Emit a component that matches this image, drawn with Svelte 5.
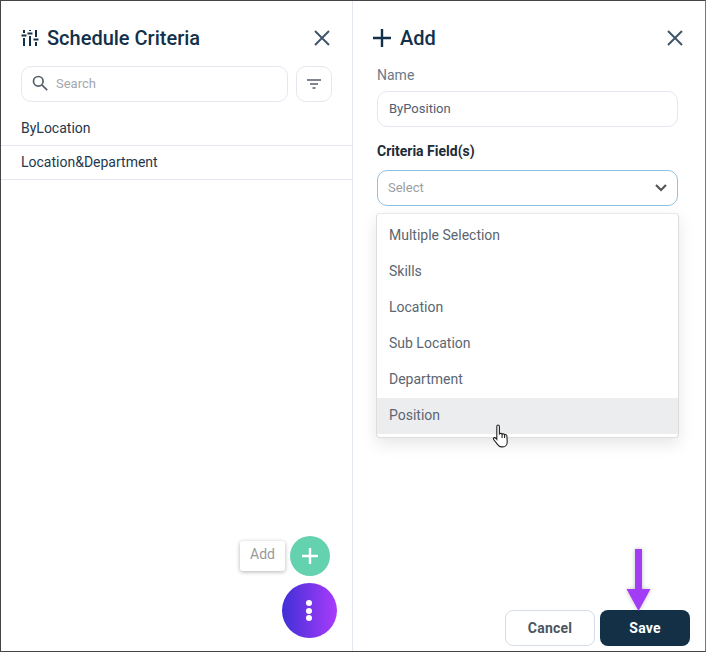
<script>
  let rows = ['ByLocation', 'Location&Department'];
  let fields = ['Multiple Selection', 'Skills', 'Location', 'Sub Location', 'Department', 'Position'];
  let name = 'ByPosition';
</script>

<main>
  <section class="left">
    <header>
      <svg class="tune" width="18" height="18" viewBox="0 0 18 18" fill="none" stroke="#12304a" stroke-width="2">
        <path d="M3 1v3M3 9v8M9 1v1M9 7v10M15 1v7M15 13v4" />
        <path d="M0.500 6.500h5M6.500 4.500h5M12.500 10.500h5" />
      </svg>
      <h1>Schedule Criteria</h1>
      <svg class="close" width="16" height="16" viewBox="0 0 16 16" fill="none" stroke="#41566b" stroke-width="2">
        <path d="M1 1l14 14M15 1L1 15" />
      </svg>
    </header>

    <div class="tools">
      <div class="search">
        <svg width="16" height="16" viewBox="0 0 16 16" fill="none" stroke="#555f6b" stroke-width="1.7">
          <circle cx="6.300" cy="6.300" r="4.800" />
          <path d="M9.800 9.800l5.400 5.400" />
        </svg>
        <span>Search</span>
      </div>
      <button class="filter" aria-label="Filter">
        <svg width="16" height="10" viewBox="0 0 16 10" fill="none" stroke="#555f6b" stroke-width="1.3">
          <path d="M1 1h14M4 5h8M6.500 9h3" />
        </svg>
      </button>
    </div>

    <ul class="rows">
      {#each rows as row}
        <li>{row}</li>
      {/each}
    </ul>

    <div class="tip">Add</div>
    <button class="fab-add" aria-label="Add">
      <svg width="16" height="16" viewBox="0 0 16 16" stroke="#fff" stroke-width="2.400"><path d="M8 0v16M0 8h16" /></svg>
    </button>
    <button class="fab-more" aria-label="More">
      <i></i><i></i><i></i>
    </button>
  </section>

  <section class="right">
    <header>
      <svg class="plus" width="18" height="18" viewBox="0 0 18 18" stroke="#12304a" stroke-width="2.400"><path d="M9 0v18M0 9h18" /></svg>
      <h1>Add</h1>
      <svg class="close" width="16" height="16" viewBox="0 0 16 16" fill="none" stroke="#41566b" stroke-width="2">
        <path d="M1 1l14 14M15 1L1 15" />
      </svg>
    </header>

    <div class="form">
      <div class="label">Name</div>
      <div class="input">{name}</div>
      <div class="label strong">Criteria Field(s)</div>
      <div class="select">
        <span>Select</span>
        <svg width="12" height="8" viewBox="0 0 12 8" fill="none" stroke="#555" stroke-width="2.200"><path d="M1 1l5 5 5-5" /></svg>
      </div>
      <ul class="menu">
        {#each fields as field}
          <li class:hover={field === 'Position'}>{field}</li>
        {/each}
      </ul>
    </div>

    <footer>
      <button class="cancel">Cancel</button>
      <button class="save">Save</button>
    </footer>

    <svg class="arrow" width="31" height="70" viewBox="0 0 31 70">
      <path d="M12 1h7v40h8.500L15.500 63 3.500 41H12z" fill="#a23cf5" />
    </svg>

    <svg class="cursor" width="18" height="26" viewBox="0 0 18 25" fill="#fff" stroke="#222" stroke-width="1.100">
      <path d="M6 1.500c1 0 1.400.7 1.400 1.600v7.200c.5-.6 2.300-.6 2.700.3.700-.5 2.200-.3 2.500.6.800-.4 2.200-.1 2.300 1.200l.3 6c0 2.800-1.800 5-4.500 5H9.500c-2 0-3-1-4-2.500L1.600 16c-.6-1 .1-2 1.100-1.900.9.100 1.500.8 2.100 1.700V3.100C4.800 2.200 5.200 1.500 6 1.500z" />
      <path d="M10.100 10.600v4M12.600 11.200v3.400" fill="none" />
    </svg>
  </section>
</main>

<style>
  :global(body) {
    margin: 0;
    background: #fff;
  }
  main {
    box-sizing: border-box;
    width: 706px;
    height: 652px;
    display: flex;
    border: 1px solid #454545;
    border-right-color: #777;
    font-family: Roboto, "Liberation Sans", sans-serif;
    background: #fff;
    overflow: hidden;
  }
  section {
    position: relative;
    display: flex;
    flex-direction: column;
    height: 100%;
  }
  .left {
    width: 352px;
    box-sizing: border-box;
    border-right: 1px solid #e3e8ee;
  }
  .right {
    flex: 1;
  }
  header {
    display: flex;
    align-items: center;
    height: 26px;
    margin-top: 24px;
    padding: 0 22px 0 20px;
  }
  h1 {
    flex: 1;
    margin: 0 0 0 8px;
    font-size: 20px;
    font-weight: 500;
    color: #12304a;
  }
  .right h1 {
    margin-left: 9px;
  }
  .tools {
    display: flex;
    gap: 8px;
    margin: 15px 20px 0;
  }
  .search {
    box-sizing: border-box;
    width: 267px;
    height: 36px;
    display: flex;
    align-items: center;
    gap: 8px;
    padding: 0 0 2px 10px;
    border: 1px solid #e3e8ee;
    border-radius: 10px;
    font-size: 13px;
    color: #a2a7ad;
  }
  .filter {
    box-sizing: border-box;
    width: 36px;
    height: 36px;
    padding: 0;
    display: flex;
    align-items: center;
    justify-content: center;
    background: #fff;
    border: 1px solid #e3e8ee;
    border-radius: 10px;
  }
  .rows {
    list-style: none;
    margin: 10px 0 0;
    padding: 0;
  }
  .rows li {
    box-sizing: border-box;
    height: 34px;
    padding: 0 20px;
    line-height: 33px;
    font-size: 14px;
    color: #24384d;
    border-bottom: 1px solid #e3e8ee;
  }
  .tip {
    position: absolute;
    left: 239px;
    top: 540px;
    width: 45px;
    height: 30px;
    line-height: 27px;
    text-align: center;
    font-size: 14px;
    color: #9a9a9a;
    background: #fff;
    border-radius: 3px;
    box-shadow: 0 1px 4px rgba(0, 0, 0, 0.3);
  }
  .fab-add {
    position: absolute;
    left: 289px;
    top: 535px;
    width: 40px;
    height: 40px;
    padding: 0;
    display: flex;
    align-items: center;
    justify-content: center;
    border: none;
    border-radius: 50%;
    background: #64d2ae;
  }
  .fab-more {
    position: absolute;
    left: 281px;
    top: 582px;
    width: 55px;
    height: 55px;
    padding: 0 1px 0 0;
    display: flex;
    flex-direction: column;
    align-items: center;
    justify-content: center;
    gap: 1.500px;
    border: none;
    border-radius: 50%;
    background: linear-gradient(90deg, #3f30d6, #aa3bfb);
  }
  .fab-more i {
    width: 6px;
    height: 6px;
    border-radius: 50%;
    background: #fff;
  }
  .form {
    padding: 0 27px 0 24px;
  }
  .label {
    margin-top: 16px;
    height: 16px;
    line-height: 16px;
    font-size: 14px;
    color: #6c7a88;
  }
  .input {
    box-sizing: border-box;
    height: 36px;
    margin-top: 8px;
    padding-left: 11px;
    line-height: 33px;
    font-size: 13px;
    color: #4f6072;
    border: 1px solid #e3e8ee;
    border-radius: 10px;
  }
  .label.strong {
    margin-top: 16px;
    font-weight: 700;
    color: #212b36;
  }
  .select {
    box-sizing: border-box;
    height: 36px;
    margin-top: 11px;
    padding: 0 10px 2px 10px;
    display: flex;
    align-items: center;
    justify-content: space-between;
    font-size: 13px;
    color: #9a9ea3;
    border: 1px solid #8fc1e3;
    border-radius: 10px;
  }
  .select svg {
    margin-top: 2px;
  }
  .menu {
    list-style: none;
    margin: 7px -1px 0 -1px;
    padding: 4px 0;
    background: #fff;
    border: 1px solid #ddd;
    border-top-color: #e8e8e8;
    border-radius: 4px;
    box-shadow: 0 6px 16px rgba(0, 0, 0, 0.1);
    box-sizing: border-box;
    height: 225px;
  }
  .menu li {
    height: 36px;
    line-height: 35px;
    padding-left: 12px;
    font-size: 14px;
    color: #5b6671;
  }
  .menu li.hover {
    background: #ecedef;
  }
  footer {
    margin-top: auto;
    margin-bottom: 5px;
    display: flex;
    justify-content: flex-end;
    gap: 5px;
    padding-right: 15px;
  }
  footer button {
    box-sizing: border-box;
    width: 90px;
    height: 36px;
    padding: 0;
    font-family: inherit;
    font-size: 14px;
    font-weight: 700;
    letter-spacing: 0.2px;
    border-radius: 8px;
  }
  .cancel {
    background: #fff;
    color: #4c5660;
    border: 1px solid #d5dde6;
  }
  .save {
    background: #133047;
    color: #fff;
    border: none;
  }
  .arrow {
    position: absolute;
    left: 270px;
    top: 547px;
    filter: drop-shadow(0 0 2px rgba(0, 0, 0, 0.25));
  }
  .cursor {
    position: absolute;
    left: 139px;
    top: 422px;
  }
</style>
